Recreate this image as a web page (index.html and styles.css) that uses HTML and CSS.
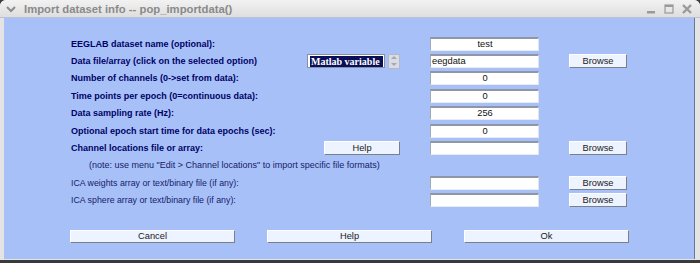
FILE: index.html
```html
<!DOCTYPE html>
<html lang="en">
<head>
    <meta charset="UTF-8">
    <title>Import dataset info -- pop_importdata()</title>
    <link rel="stylesheet" href="styles.css">
</head>
<body>
    <div class="window">
        <div class="titlebar">
            <svg class="chevron" width="12" height="10" viewBox="0 0 12 10">
                <path d="M2 3 L6 7 L10 3" fill="none" stroke="#8c8c8c" stroke-width="2"/>
            </svg>
            <span class="title">Import dataset info -- pop_importdata()</span>
            <div class="controls">
                <svg width="14" height="12" viewBox="0 0 14 12">
                    <rect x="3" y="8" width="8" height="2.5" fill="#9a9a9a"/>
                </svg>
                <svg width="14" height="12" viewBox="0 0 14 12">
                    <rect x="3" y="2" width="8" height="8" fill="none" stroke="#9a9a9a" stroke-width="1.2"/>
                    <rect x="3" y="2" width="8" height="2" fill="#9a9a9a"/>
                </svg>
                <svg width="14" height="12" viewBox="0 0 14 12">
                    <path d="M3 2 L11 10 M11 2 L3 10" stroke="#9a9a9a" stroke-width="2.4"/>
                </svg>
            </div>
        </div>
        <div class="content">
            <div class="form">
                <div class="row">
                    <span class="label bold">EEGLAB dataset name (optional):</span>
                    <span class="edit center">test</span>
                </div>
                <div class="row">
                    <span class="label bold">Data file/array (click on the selected option)</span>
                    <div class="popup-cell">
                        <span class="popup"><span class="selected">Matlab variable</span></span>
                        <span class="slider"><span class="arrow up"></span><span class="arrow down"></span></span>
                    </div>
                    <span class="edit">eegdata</span>
                    <button class="btn browse">Browse</button>
                </div>
                <div class="row">
                    <span class="label bold">Number of channels (0-&gt;set from data):</span>
                    <span class="edit center">0</span>
                </div>
                <div class="row">
                    <span class="label bold">Time points per epoch (0=continuous data):</span>
                    <span class="edit center">0</span>
                </div>
                <div class="row">
                    <span class="label bold">Data sampling rate (Hz):</span>
                    <span class="edit center">256</span>
                </div>
                <div class="row">
                    <span class="label bold">Optional epoch start time for data epochs (sec):</span>
                    <span class="edit center">0</span>
                </div>
                <div class="row">
                    <span class="label bold">Channel locations file or array:</span>
                    <button class="btn help-small">Help</button>
                    <span class="edit"></span>
                    <button class="btn browse">Browse</button>
                </div>
                <div class="row">
                    <span class="note">(note: use menu "Edit &gt; Channel locations" to import specific file formats)</span>
                </div>
                <div class="row">
                    <span class="label">ICA weights array or text/binary file (if any):</span>
                    <span class="edit"></span>
                    <button class="btn browse">Browse</button>
                </div>
                <div class="row">
                    <span class="label">ICA sphere array or text/binary file (if any):</span>
                    <span class="edit"></span>
                    <button class="btn browse">Browse</button>
                </div>
            </div>
            <div class="actions">
                <button class="btn wide">Cancel</button>
                <button class="btn wide">Help</button>
                <button class="btn wide">Ok</button>
            </div>
        </div>
    </div>
</body>
</html>
```

FILE: styles.css
```css
body {
    margin: 0;
    width: 700px;
    height: 263px;
    overflow: hidden;
    background-color: #3a3a3a;
    font-family: 'Liberation Sans', Arial, sans-serif;
}

.window {
    width: 700px;
    height: 260px;
    background-color: #e4e4e4;
    border-radius: 6px 6px 0 0;
    display: flex;
    flex-direction: column;
}

.titlebar {
    height: 17px;
    display: flex;
    align-items: center;
    background: linear-gradient(#f2f2f2, #dedede);
    border-bottom: 1px solid #b8c2d4;
    border-radius: 6px 6px 0 0;
}

.chevron {
    margin-left: 5px;
    margin-right: 7px;
}

.title {
    color: #8a8a8a;
    font-weight: bold;
    font-size: 11.3px;
}

.controls {
    margin-left: auto;
    margin-right: 6px;
    display: flex;
    gap: 4px;
}

.content {
    flex: 1;
    margin: 0 5px 1px 4px;
    background-color: #a7c0f8;
    border-right: 1px solid #6c7698;
    display: flex;
    flex-direction: column;
}

.form {
    padding: 17px 0 0 67px;
}

.row {
    height: 17.4px;
    display: grid;
    grid-template-columns: 236px 93px 30px 109px 30px 58px;
    grid-template-rows: 17.4px;
    align-items: center;
}

.row > * {
    grid-row: 1;
}

.label {
    grid-column: 1;
    color: #16206a;
    font-size: 8.8px;
    white-space: nowrap;
}

.bold {
    color: #000066;
    font-weight: bold;
    font-size: 9px;
}

.note {
    grid-column: 1 / 5;
    padding-left: 18px;
    color: #16206a;
    font-size: 9px;
    white-space: nowrap;
}

.edit {
    grid-column: 4;
    height: 11px;
    background-color: #ffffff;
    border-top: 2px solid #8f96a6;
    border-left: 1px solid #a2a8b6;
    border-bottom: 1px solid #e8ecf4;
    border-right: 1px solid #e0e4ee;
    font-size: 9.3px;
    line-height: 11px;
    color: #111;
    padding-left: 1px;
}

.center {
    text-align: center;
}

.btn {
    height: 14px;
    padding: 0;
    background-color: #edf3ff;
    border-top: 1px solid #ffffff;
    border-left: 1px solid #ffffff;
    border-bottom: 1px solid #7a7f8c;
    border-right: 1px solid #7a7f8c;
    font-family: 'Liberation Sans', Arial, sans-serif;
    font-size: 9.3px;
    color: #1a1a1a;
}

.browse {
    grid-column: 6;
}

.help-small {
    grid-column: 2;
    width: 76px;
    margin-left: 17px;
}

.popup-cell {
    grid-column: 2;
    display: flex;
    align-items: center;
    gap: 3px;
}

.popup {
    width: 77px;
    height: 12px;
    background-color: #ffffff;
    border: 1px solid #8a8fa0;
    display: flex;
    align-items: center;
    padding-left: 2px;
}

.selected {
    background-color: #0a0f5a;
    color: #ffffff;
    font-family: 'Liberation Serif', 'Times New Roman', serif;
    font-weight: bold;
    font-size: 10px;
    line-height: 11px;
    padding: 0 3px 0 1px;
}

.slider {
    width: 10px;
    height: 13px;
    background-color: #d8dce6;
    border: 1px solid #b4b8c4;
    display: flex;
    flex-direction: column;
    align-items: center;
    justify-content: space-around;
}

.arrow {
    width: 0;
    height: 0;
    border-left: 3px solid transparent;
    border-right: 3px solid transparent;
}

.up {
    border-bottom: 3px solid #a4a8b2;
}

.down {
    border-top: 3px solid #a4a8b2;
}

.actions {
    display: grid;
    grid-template-columns: 165px 165px 165px;
    column-gap: 32px;
    padding: 21px 0 0 66px;
}

.wide {
    height: 13px;
}
```
